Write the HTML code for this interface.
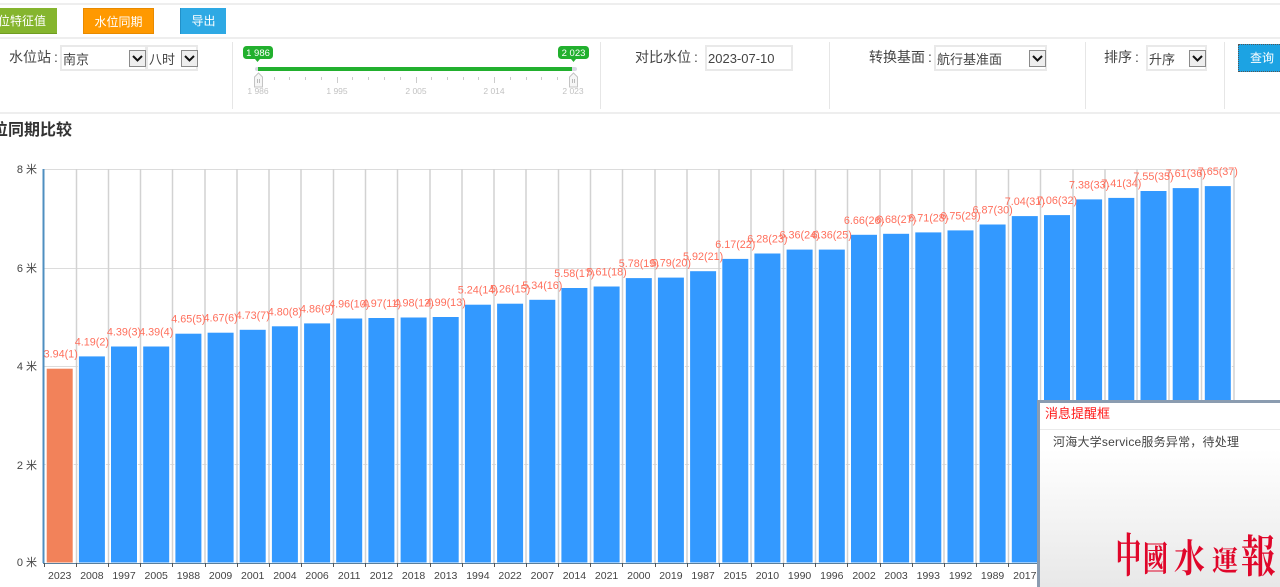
<!DOCTYPE html>
<html lang="zh">
<head>
<meta charset="utf-8">
<title>水位同期比较</title>
<style>
html,body{margin:0;padding:0;width:1280px;height:587px;overflow:hidden;background:#fff;}
body{position:relative;font-family:"Liberation Sans","Noto Sans CJK SC",sans-serif;color:#444;font-size:13px;}
#wrap{position:absolute;left:0;top:0;width:1280px;height:587px;overflow:hidden;filter:blur(.35px);}
.abs{position:absolute;}
.hl{position:absolute;left:0;width:1280px;height:2px;background:#eee;}
.vl{position:absolute;top:42px;width:1px;height:67px;background:#e6e6e6;}
.btn{position:absolute;top:8px;height:26px;line-height:26px;box-sizing:border-box;color:#fff;text-align:center;font-size:12px;}
.lab{position:absolute;top:48px;line-height:18px;font-size:14px;color:#444;white-space:nowrap;}
.lab i{font-style:normal;margin-left:3px;}
.sel{position:absolute;top:45px;height:26px;box-sizing:border-box;border:2px solid #e9e9e9;background:#fff;font-size:13px;line-height:26px;padding-left:1px;color:#444;white-space:nowrap;}
.arr{position:absolute;top:3px;width:17px;height:17px;box-sizing:border-box;border:1px solid #8a8a8a;background:#eee;}
.arr svg{display:block;width:15px;height:15px;}
#pop{position:absolute;left:1037px;top:400px;width:243px;height:187px;box-sizing:border-box;border-left:3px solid #8b9cb0;border-top:3px solid #8b9cb0;background:linear-gradient(#fff 25%,#e8e8e8 100%);}
</style>
</head>
<body>
<div id="wrap">
<div class="hl" style="top:3px"></div>
<div class="hl" style="top:37px"></div>
<div class="hl" style="top:112px"></div>

<div class="btn" style="left:-25px;width:82px;background:#85b52e;border-bottom:1px solid #6f9c22;">水位特征值</div>
<div class="btn" style="left:83px;width:71px;background:#ff9900;border:1px solid #e88a00;">水位同期</div>
<div class="btn" style="left:180px;width:46px;background:#2ea9e4;border-left:1px solid #2290c8;">导出</div>

<div class="vl" style="left:232px"></div>
<div class="vl" style="left:600px"></div>
<div class="vl" style="left:829px"></div>
<div class="vl" style="left:1085px"></div>
<div class="vl" style="left:1224px"></div>

<div class="lab" style="left:9px">水位站<i>:</i></div>
<div class="sel" style="left:60px;width:87px;">南京<div class="arr" style="left:67px"><svg viewBox="0 0 15 15"><path d="M3 5l4.500 4.500L12 5" fill="none" stroke="#111" stroke-width="2"/></svg></div></div>
<div class="sel" style="left:146px;width:52px;">八时<div class="arr" style="left:33px"><svg viewBox="0 0 15 15"><path d="M3 5l4.500 4.500L12 5" fill="none" stroke="#111" stroke-width="2"/></svg></div></div>

<svg class="abs" style="left:232px;top:40px" width="368" height="60" font-family="Liberation Sans, sans-serif">
<rect x="11" y="6" width="30" height="13" rx="3.500" fill="#22b02e"/>
<path d="M23 19h5l-2.500 3z" fill="#22b02e"/>
<text x="26" y="16" font-size="9.500" fill="#fff" text-anchor="middle">1 986</text>
<rect x="326" y="6" width="31" height="13" rx="3.500" fill="#22b02e"/>
<path d="M339 19h5l-2.500 3z" fill="#22b02e"/>
<text x="341.500" y="16" font-size="9.500" fill="#fff" text-anchor="middle">2 023</text>
<rect x="23" y="27" width="322" height="4" rx="2" fill="#d8d8e4"/>
<rect x="26" y="27" width="314" height="4" fill="#22b02e"/>
<path d="M22.500 37l4-4 4 4v10h-8z" fill="#f6f6f6" stroke="#c4c4c4"/>
<path d="M337.500 37l4-4 4 4v10h-8z" fill="#f6f6f6" stroke="#c4c4c4"/>
<path d="M25.500 39v4M27.500 39v4M340.500 39v4M342.500 39v4" stroke="#bbb"/>
<path d="M42.500 37v3M57.500 37v3M73.500 37v3M89.500 37v3M105.500 37v6M120.500 37v3M136.500 37v3M152.500 37v3M168.500 37v3M184.500 37v6M199.500 37v3M215.500 37v3M231.500 37v3M246.500 37v3M262.500 37v6M278.500 37v3M294.500 37v3M309.500 37v3M325.500 37v3" stroke="#ccc"/>
<g font-size="8.500" fill="#c2c2c2" text-anchor="middle">
<text x="26" y="54">1 986</text>
<text x="105" y="54">1 995</text>
<text x="184" y="54">2 005</text>
<text x="262" y="54">2 014</text>
<text x="341" y="54">2 023</text>
</g>
</svg>

<div class="lab" style="left:635px">对比水位<i>:</i></div>
<div class="sel" style="left:705px;width:88px;padding-left:1px;font-size:13px;line-height:24px;">2023-07-10</div>

<div class="lab" style="left:869px">转换基面<i>:</i></div>
<div class="sel" style="left:934px;width:113px;">航行基准面<div class="arr" style="left:93px"><svg viewBox="0 0 15 15"><path d="M3 5l4.500 4.500L12 5" fill="none" stroke="#111" stroke-width="2"/></svg></div></div>

<div class="lab" style="left:1104px">排序<i>:</i></div>
<div class="sel" style="left:1146px;width:61px;">升序<div class="arr" style="left:41px"><svg viewBox="0 0 15 15"><path d="M3 5l4.500 4.500L12 5" fill="none" stroke="#111" stroke-width="2"/></svg></div></div>

<div class="abs" style="left:1238px;top:44px;width:50px;height:28px;box-sizing:border-box;border:1px dotted #555;background:#1ca3e3;color:#fff;font-size:12px;line-height:27px;padding-left:11px;">查询</div>

<div class="abs" style="left:-24px;top:120px;font-size:16px;font-weight:700;line-height:22px;color:#333;white-space:nowrap;">水位同期比较</div>

<svg class="abs" style="left:0;top:150px" width="1280" height="437" viewBox="0 150 1280 437" font-family="Liberation Sans, Noto Sans CJK SC, sans-serif">
<g fill="none">
<path stroke="#dcdcdc" d="M44 169.500H1234M44 268.500H1234M44 366.500H1234M44 464.500H1234"/>
<path stroke="#d2d2d2" stroke-width="1.500" d="M76.500 169V563M108.500 169V563M140.500 169V563M172.500 169V563M205 169V563M237 169V563M269 169V563M301 169V563M333.500 169V563M365.500 169V563M397.500 169V563M430 169V563M462 169V563M494 169V563M526 169V563M558.500 169V563M590.500 169V563M622.500 169V563M655 169V563M687 169V563M719 169V563M751 169V563M783.500 169V563M815.500 169V563M847.500 169V563M880 169V563M912 169V563M944 169V563M976 169V563M1008.500 169V563M1040.500 169V563M1073 169V563M1105 169V563M1137 169V563M1169 169V563M1201.500 169V563M1234 169V563"/>
</g>
<g fill="#3399ff" stroke="#fff" stroke-width="2" paint-order="stroke">
<rect x="46.700" y="368.700" width="26" height="193.800" fill="#f2825a"/>
<rect x="78.900" y="356.400" width="26" height="206.100"/>
<rect x="111" y="346.500" width="26" height="216"/>
<rect x="143.200" y="346.500" width="26" height="216"/>
<rect x="175.400" y="333.700" width="26" height="228.800"/>
<rect x="207.600" y="332.700" width="26" height="229.800"/>
<rect x="239.700" y="329.800" width="26" height="232.700"/>
<rect x="271.900" y="326.300" width="26" height="236.200"/>
<rect x="304.100" y="323.400" width="26" height="239.100"/>
<rect x="336.200" y="318.500" width="26" height="244"/>
<rect x="368.400" y="318" width="26" height="244.500"/>
<rect x="400.600" y="317.500" width="26" height="245"/>
<rect x="432.700" y="317" width="26" height="245.500"/>
<rect x="464.900" y="304.700" width="26" height="257.800"/>
<rect x="497.100" y="303.700" width="26" height="258.800"/>
<rect x="529.300" y="299.800" width="26" height="262.700"/>
<rect x="561.400" y="288" width="26" height="274.500"/>
<rect x="593.600" y="286.500" width="26" height="276"/>
<rect x="625.800" y="278.100" width="26" height="284.400"/>
<rect x="657.900" y="277.600" width="26" height="284.900"/>
<rect x="690.100" y="271.200" width="26" height="291.300"/>
<rect x="722.300" y="258.900" width="26" height="303.600"/>
<rect x="754.400" y="253.500" width="26" height="309"/>
<rect x="786.600" y="249.600" width="26" height="312.900"/>
<rect x="818.800" y="249.600" width="26" height="312.900"/>
<rect x="851" y="234.800" width="26" height="327.700"/>
<rect x="883.100" y="233.800" width="26" height="328.700"/>
<rect x="915.300" y="232.400" width="26" height="330.100"/>
<rect x="947.500" y="230.400" width="26" height="332.100"/>
<rect x="979.600" y="224.500" width="26" height="338"/>
<rect x="1011.800" y="216.100" width="26" height="346.400"/>
<rect x="1044" y="215.100" width="26" height="347.400"/>
<rect x="1076.100" y="199.400" width="26" height="363.100"/>
<rect x="1108.300" y="197.900" width="26" height="364.600"/>
<rect x="1140.500" y="191" width="26" height="371.500"/>
<rect x="1172.700" y="188.100" width="26" height="374.400"/>
<rect x="1204.800" y="186.100" width="26" height="376.400"/>
</g>
<path d="M43.500 169V563" stroke="#4f8fc0" stroke-width="2"/>
<path d="M43 563.500H1040" stroke="#5a7f9c" stroke-width="1"/>
<path d="M44.500 563v4M76.500 563v4M108.500 563v4M140.500 563v4M172.500 563v4M205.500 563v4M237.500 563v4M269.500 563v4M301.500 563v4M333.500 563v4M365.500 563v4M397.500 563v4M430.500 563v4M462.500 563v4M494.500 563v4M526.500 563v4M558.500 563v4M590.500 563v4M622.500 563v4M655.500 563v4M687.500 563v4M719.500 563v4M751.500 563v4M783.500 563v4M815.500 563v4M847.500 563v4M880.500 563v4M912.500 563v4M944.500 563v4M976.500 563v4M1008.500 563v4" stroke="#555"/>
<g font-size="11" fill="#444" text-anchor="end">
<text x="37" y="173">8 米</text>
<text x="37" y="272">6 米</text>
<text x="37" y="370">4 米</text>
<text x="37" y="469">2 米</text>
<text x="37" y="566">0 米</text>
</g>
<g font-size="10.500" fill="#444" text-anchor="middle">
<text x="59.700" y="579">2023</text><text x="91.900" y="579">2008</text><text x="124" y="579">1997</text><text x="156.200" y="579">2005</text><text x="188.400" y="579">1988</text><text x="220.600" y="579">2009</text><text x="252.700" y="579">2001</text><text x="284.900" y="579">2004</text><text x="317.100" y="579">2006</text><text x="349.200" y="579">2011</text><text x="381.400" y="579">2012</text><text x="413.600" y="579">2018</text><text x="445.700" y="579">2013</text><text x="477.900" y="579">1994</text><text x="510.100" y="579">2022</text><text x="542.300" y="579">2007</text><text x="574.400" y="579">2014</text><text x="606.600" y="579">2021</text><text x="638.800" y="579">2000</text><text x="670.900" y="579">2019</text><text x="703.100" y="579">1987</text><text x="735.300" y="579">2015</text><text x="767.400" y="579">2010</text><text x="799.600" y="579">1990</text><text x="831.800" y="579">1996</text><text x="864" y="579">2002</text><text x="896.100" y="579">2003</text><text x="928.300" y="579">1993</text><text x="960.500" y="579">1992</text><text x="992.600" y="579">1989</text><text x="1024.800" y="579">2017</text>
</g>
<g font-size="10.800" fill="#ff6f5c" text-anchor="middle" transform="translate(0,-1)">
<text x="60.700" y="358.700">3.94(1)</text>
<text x="91.900" y="346.400">4.19(2)</text>
<text x="124" y="336.500">4.39(3)</text>
<text x="156.200" y="336.500">4.39(4)</text>
<text x="188.400" y="323.700">4.65(5)</text>
<text x="220.600" y="322.700">4.67(6)</text>
<text x="252.700" y="319.800">4.73(7)</text>
<text x="284.900" y="316.300">4.80(8)</text>
<text x="317.100" y="313.400">4.86(9)</text>
<text x="349.200" y="308.500">4.96(10)</text>
<text x="381.400" y="308">4.97(11)</text>
<text x="413.600" y="307.500">4.98(12)</text>
<text x="445.700" y="307">4.99(13)</text>
<text x="477.900" y="294.700">5.24(14)</text>
<text x="510.100" y="293.700">5.26(15)</text>
<text x="542.300" y="289.800">5.34(16)</text>
<text x="574.400" y="278">5.58(17)</text>
<text x="606.600" y="276.500">5.61(18)</text>
<text x="638.800" y="268.100">5.78(19)</text>
<text x="670.900" y="267.600">5.79(20)</text>
<text x="703.100" y="261.200">5.92(21)</text>
<text x="735.300" y="248.900">6.17(22)</text>
<text x="767.400" y="243.500">6.28(23)</text>
<text x="799.600" y="239.600">6.36(24)</text>
<text x="831.800" y="239.600">6.36(25)</text>
<text x="864" y="224.800">6.66(26)</text>
<text x="896.100" y="223.800">6.68(27)</text>
<text x="928.300" y="222.400">6.71(28)</text>
<text x="960.500" y="220.400">6.75(29)</text>
<text x="992.600" y="214.500">6.87(30)</text>
<text x="1024.800" y="206.100">7.04(31)</text>
<text x="1057" y="205.100">7.06(32)</text>
<text x="1089.100" y="189.400">7.38(33)</text>
<text x="1121.300" y="187.900">7.41(34)</text>
<text x="1153.500" y="181">7.55(35)</text>
<text x="1185.700" y="178.100">7.61(36)</text>
<text x="1217.800" y="176.100">7.65(37)</text>
</g>
</svg>

<div id="pop">
<div class="abs" style="left:5px;top:1px;font-size:13px;line-height:20px;color:#ff1a1a;">消息提醒框</div>
<div class="abs" style="left:0;top:26px;width:240px;height:1px;background:#eaeaea;"></div>
<div class="abs" style="left:13px;top:30px;font-size:12px;line-height:18px;color:#444;white-space:nowrap;letter-spacing:.22px;">河海大学service服务异常，待处理</div>
</div>

<svg class="abs" style="left:1100px;top:520px" width="180" height="67" viewBox="0 0 180 67" font-family="Noto Serif CJK SC, Liberation Serif, serif" font-weight="700" fill="#e0062a">
<text transform="translate(15.500,52) scale(.86,1.560)" font-size="30">中</text>
<text transform="translate(43,51) scale(.86,1.200)" font-size="29">國</text>
<text transform="translate(74,52) scale(1,1.250)" font-size="31">水</text>
<text transform="translate(112,50) scale(.9,.95)" font-size="29">運</text>
<text transform="translate(141,52) scale(1.050,1.350)" font-size="33">報</text>
</svg>
</div>
</body>
</html>
